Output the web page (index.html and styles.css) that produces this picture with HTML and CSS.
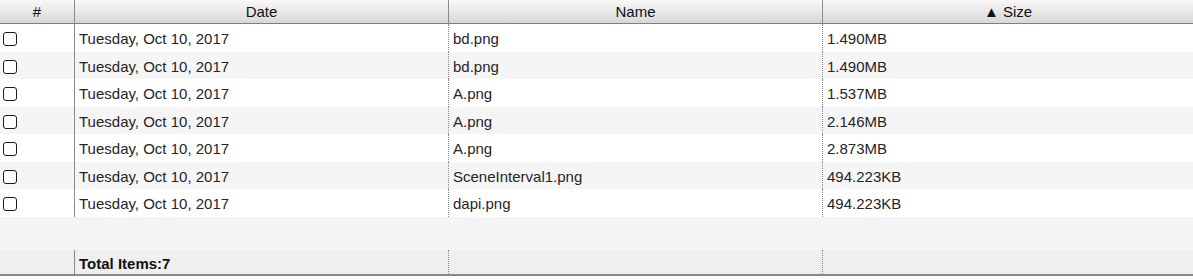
FILE: index.html
```html
<!DOCTYPE html>
<html>
<head>
<meta charset="utf-8">
<link rel="stylesheet" href="styles.css">
</head>
<body>
<div class="grid">
  <div class="head">
    <div class="hc">#</div>
    <div class="hc sep">Date</div>
    <div class="hc sep">Name</div>
    <div class="hc sep">▲ Size</div>
  </div>
  <div class="rows">
    <div class="row"><div class="c chk"><input type="checkbox"></div><div class="c date">Tuesday, Oct 10, 2017</div><div class="c dot">bd.png</div><div class="c dot">1.490MB</div></div>
    <div class="row"><div class="c chk"><input type="checkbox"></div><div class="c date">Tuesday, Oct 10, 2017</div><div class="c dot">bd.png</div><div class="c dot">1.490MB</div></div>
    <div class="row"><div class="c chk"><input type="checkbox"></div><div class="c date">Tuesday, Oct 10, 2017</div><div class="c dot">A.png</div><div class="c dot">1.537MB</div></div>
    <div class="row"><div class="c chk"><input type="checkbox"></div><div class="c date">Tuesday, Oct 10, 2017</div><div class="c dot">A.png</div><div class="c dot">2.146MB</div></div>
    <div class="row"><div class="c chk"><input type="checkbox"></div><div class="c date">Tuesday, Oct 10, 2017</div><div class="c dot">A.png</div><div class="c dot">2.873MB</div></div>
    <div class="row"><div class="c chk"><input type="checkbox"></div><div class="c date">Tuesday, Oct 10, 2017</div><div class="c dot">SceneInterval1.png</div><div class="c dot">494.223KB</div></div>
    <div class="row"><div class="c chk"><input type="checkbox"></div><div class="c date">Tuesday, Oct 10, 2017</div><div class="c dot">dapi.png</div><div class="c dot">494.223KB</div></div>
  </div>
  <div class="filler"></div>
  <div class="foot">
    <div class="c"></div>
    <div class="c date total">Total Items:7</div>
    <div class="c dot"></div>
    <div class="c dot"></div>
  </div>
</div>
</body>
</html>
```

FILE: styles.css
```css
html, body {
  margin: 0;
  padding: 0;
  background: #fff;
}
body {
  font-family: "Liberation Sans", Arial, sans-serif;
  font-size: 15px;
  color: #222;
}
.grid {
  width: 1193px;
}
.head, .row, .foot {
  display: grid;
  grid-template-columns: 74px 374px 374px 1fr;
}
.head {
  height: 23px;
  background: linear-gradient(#f8f8f8, #d8d8d8);
  border-bottom: 1px solid #7f7f7f;
}
.hc {
  display: flex;
  align-items: center;
  justify-content: center;
  color: #111;
  line-height: 23px;
}
.hc.sep {
  border-left: 1px solid #8a8a8a;
}
.row {
  height: 27.5px;
  background: #fff;
}
.row:nth-child(even) {
  background: #f5f5f5;
}
.c {
  display: flex;
  align-items: center;
  padding-left: 4px;
  padding-top: 2px;
  white-space: nowrap;
  color: #252525;
}
.chk {
  padding-left: 0;
}
.chk input {
  appearance: none;
  -webkit-appearance: none;
  box-sizing: border-box;
  width: 14px;
  height: 14px;
  margin: 1px 0 0 3px;
  border: 1px solid #1a1a1a;
  border-radius: 3px;
  background: #fff;
}
.date {
  border-left: 1px solid #8a8a8a;
}
.dot {
  border-left: 1px dotted #8a8a8a;
}
.filler {
  height: 33.5px;
  background: #f4f4f4;
}
.foot {
  height: 24px;
  background: #efefef;
  border-bottom: 2px solid #8a8a8a;
}
.total {
  font-weight: bold;
  color: #111;
}
```
